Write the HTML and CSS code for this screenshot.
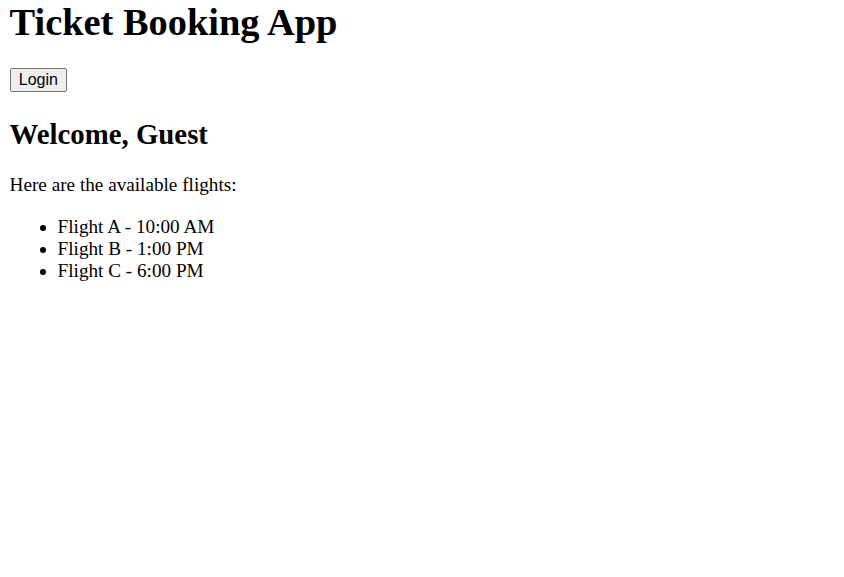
FILE: index.html
```html
<!DOCTYPE html>
<html>
<head>
<meta charset="utf-8">
<link rel="stylesheet" href="styles.css">
</head>
<body class="page">
<header class="header">
<h1 class="title">Ticket Booking App</h1>
<button class="login">Login</button>
</header>
<main class="content">
<h2 class="welcome">Welcome, Guest</h2>
<p class="intro">Here are the available flights:</p>
<ul class="flights">
<li>Flight A - 10:00 AM</li>
<li>Flight B - 1:00 PM</li>
<li>Flight C - 6:00 PM</li>
</ul>
</main>
</body>
</html>
```
FILE: styles.css
```css
.page {
  margin: 0 9.6px;
  font-family: "Liberation Serif", "Times New Roman", serif;
  font-size: 19.2px;
  color: #000;
  background: #fff;
}
.title {
  font-size: 38.4px;
  margin: 0 0 23.7px;
}
.login {
  font-family: "Liberation Sans", Arial, sans-serif;
  font-size: 16px;
  color: #000;
  background: #efefef;
  border: 1px solid #767676;
  border-radius: 2px;
  padding: 2px 8.2px;
}
.welcome {
  font-size: 28.8px;
  margin: 25.9px 0 23.9px;
}
.intro {
  margin: 19.2px 0;
}
.flights {
  margin: 19.2px 0;
  padding-left: 48px;
}
```
